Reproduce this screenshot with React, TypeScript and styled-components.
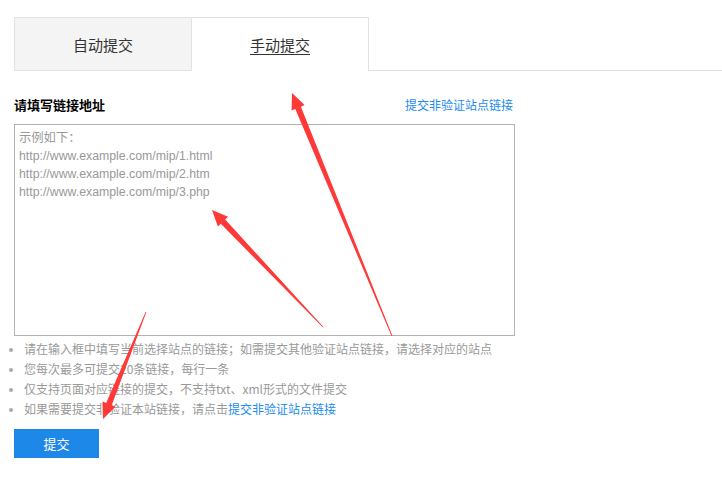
import React from "react";
import styled, { createGlobalStyle } from "styled-components";

const Global = createGlobalStyle`
  html, body { margin: 0; padding: 0; background: #fff; }
  body { font-family: "Liberation Sans", "Noto Sans CJK SC", sans-serif; }
`;

const Page = styled.div`
  position: relative;
  width: 722px;
  height: 477px;
  overflow: hidden;
  padding-top: 17px;
  box-sizing: border-box;
`;

const TabBar = styled.div`
  display: flex;
  margin-left: 14px;
  border-bottom: 1px solid #e2e2e2;
  height: 53px;
`;

const Tab = styled.div<{ $active?: boolean }>`
  box-sizing: border-box;
  border: 1px solid #e2e2e2;
  border-bottom: none;
  margin-left: ${(p) => (p.$active ? "-1px" : "0")};
  background: ${(p) => (p.$active ? "#fff" : "#f4f4f4")};
  width: 178px;
  height: ${(p) => (p.$active ? "54px" : "53px")};
  display: flex;
  align-items: center;
  justify-content: center;
  padding-bottom: ${(p) => (p.$active ? "1px" : "0")};
  font-family: "Noto Sans CJK SC", sans-serif;
  font-size: 15px;
  color: #333;
  text-decoration: ${(p) => (p.$active ? "underline" : "none")};
  text-underline-offset: 3px;
`;

const Form = styled.div`
  width: 501px;
  margin: 24px 0 0 14px;
`;

const LabelRow = styled.div`
  display: flex;
  justify-content: space-between;
  align-items: center;
  height: 18px;
  font-family: "Noto Sans CJK SC", sans-serif;
`;

const Label = styled.span`
  font-size: 13px;
  font-weight: bold;
  color: #000;
`;

const Link = styled.a`
  font-family: "Noto Sans CJK SC", sans-serif;
  font-size: 12px;
  color: #1a8cf0;
  text-decoration: none;
  cursor: pointer;
`;

const TopLink = styled(Link)`
  margin-right: 2px;
`;

const Area = styled.textarea`
  display: block;
  margin-top: 11px;
  width: 501px;
  height: 212px;
  box-sizing: border-box;
  border: 1px solid #b3b3b3;
  padding: 4px 4px;
  resize: none;
  font-family: "Liberation Sans", "Noto Sans CJK SC", sans-serif;
  font-size: 12.3px;
  line-height: 18px;
  color: #333;
  outline: none;
  &::placeholder { color: #999; }
`;

const Tips = styled.ul`
  margin: 3px 0 0 0;
  padding-left: 10px;
  list-style: disc;
  font-family: "Noto Sans CJK SC", sans-serif;
  font-size: 12px;
  line-height: 20px;
  color: #999;
  white-space: nowrap;
  li::marker { color: #aaa; font-size: 10px; }
`;

const Button = styled.button`
  display: block;
  margin-top: 10px;
  width: 85px;
  height: 29px;
  border: none;
  background: #1e88e8;
  color: #fff;
  font-family: "Noto Sans CJK SC", sans-serif;
  font-size: 13px;
  cursor: pointer;
`;

const Overlay = styled.svg`
  position: absolute;
  left: 0;
  top: 0;
  pointer-events: none;
`;

type Pt = [number, number];

function arrowPoints(tail: Pt, tip: Pt, headLen = 16, headW = 14, shaftW = 6): string {
  const dx = tip[0] - tail[0];
  const dy = tip[1] - tail[1];
  const len = Math.hypot(dx, dy);
  const ux = dx / len, uy = dy / len;
  const nx = -uy, ny = ux;
  const bx = tip[0] - ux * headLen, by = tip[1] - uy * headLen;
  const pts: Pt[] = [
    [tail[0] + nx * 0.4, tail[1] + ny * 0.4],
    [bx + nx * shaftW / 2, by + ny * shaftW / 2],
    [bx + nx * headW / 2, by + ny * headW / 2],
    [tip[0], tip[1]],
    [bx - nx * headW / 2, by - ny * headW / 2],
    [bx - nx * shaftW / 2, by - ny * shaftW / 2],
    [tail[0] - nx * 0.4, tail[1] - ny * 0.4],
  ];
  return pts.map((p) => `${p[0].toFixed(1)},${p[1].toFixed(1)}`).join(" ");
}

const arrows: { tail: Pt; tip: Pt }[] = [
  { tail: [392, 336], tip: [292, 93] },
  { tail: [323, 327], tip: [212, 210] },
  { tail: [146, 312], tip: [103, 419] },
];

export default function App() {
  return (
    <>
      <Global />
      <Page>
        <TabBar>
          <Tab>自动提交</Tab>
          <Tab $active>手动提交</Tab>
        </TabBar>
        <Form>
          <LabelRow>
            <Label>请填写链接地址</Label>
            <TopLink>提交非验证站点链接</TopLink>
          </LabelRow>
          <Area
            placeholder={
              "示例如下：\nhttp://www.example.com/mip/1.html\nhttp://www.example.com/mip/2.htm\nhttp://www.example.com/mip/3.php"
            }
          />
          <Tips>
            <li>请在输入框中填写当前选择站点的链接；如需提交其他验证站点链接，请选择对应的站点</li>
            <li>您每次最多可提交20条链接，每行一条</li>
            <li>仅支持页面对应链接的提交，不支持txt、xml形式的文件提交</li>
            <li>
              如果需要提交非验证本站链接，请点击<Link>提交非验证站点链接</Link>
            </li>
          </Tips>
          <Button>提交</Button>
        </Form>
        <Overlay width={722} height={477} viewBox="0 0 722 477">
          {arrows.map((a, i) => (
            <polygon key={i} points={arrowPoints(a.tail, a.tip)} fill="#ff3838" />
          ))}
        </Overlay>
      </Page>
    </>
  );
}
